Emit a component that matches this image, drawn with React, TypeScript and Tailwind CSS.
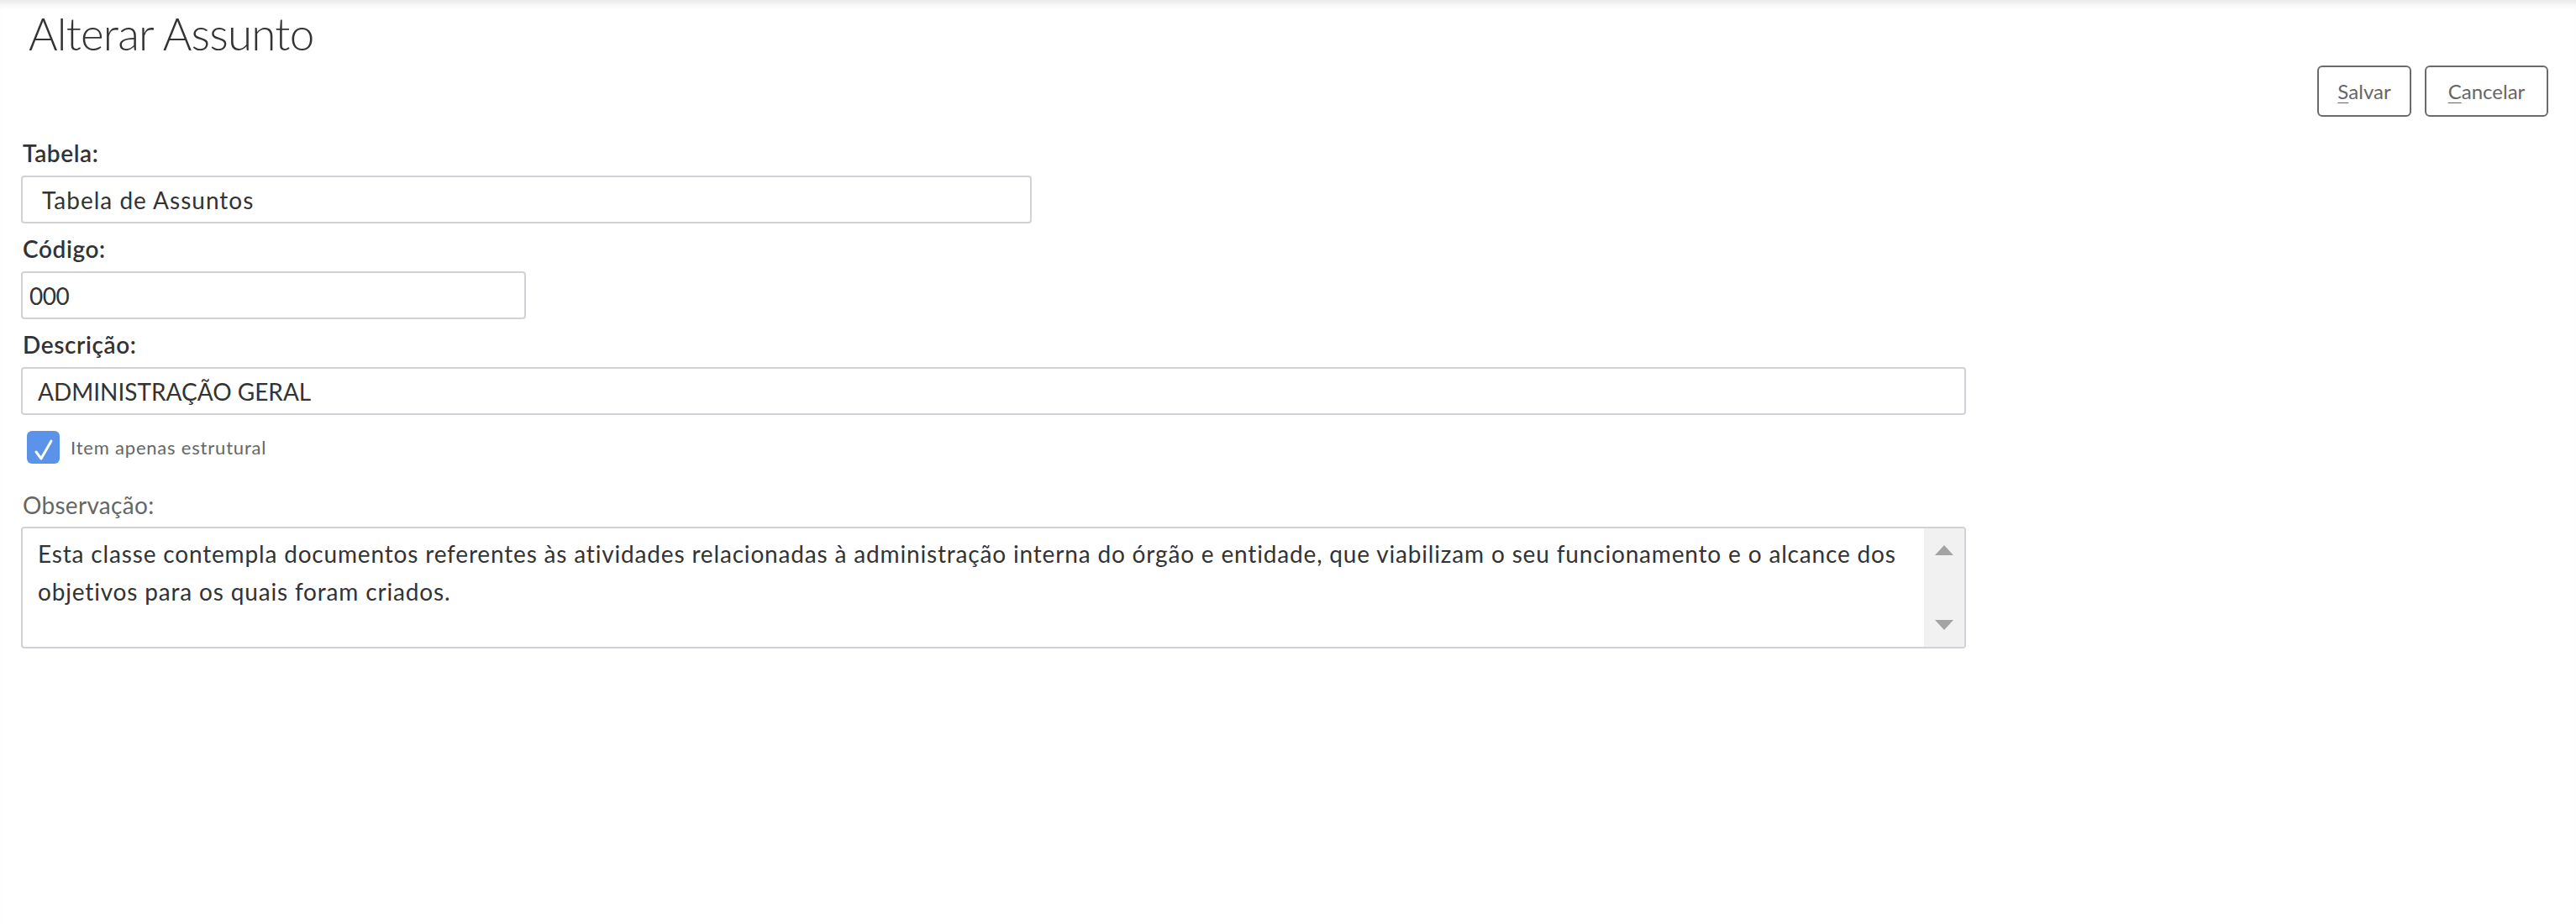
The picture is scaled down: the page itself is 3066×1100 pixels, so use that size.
import React from "react";

const font = { fontFamily: "Lato, 'Open Sans', sans-serif" };

export default function App() {
  return (
    <div
      className="min-h-[1100px] w-full bg-white text-[#333] shadow-[inset_0_10px_8px_-6px_rgba(0,0,0,0.10)]"
      style={font}
    >
      {/* Title */}
      <h1 className="pt-[10px] pl-[34px] text-[53px] leading-[60px] font-light tracking-[-0.8px] text-[#333]">
        Alterar Assunto
      </h1>

      {/* Actions */}
      <div className="mt-[8px] flex justify-end gap-[16px] pr-[33px]">
        <button className="flex h-[61px] w-[112px] items-center justify-center rounded-[6px] border-2 border-[#6b6b6b] text-[24px] text-[#666]">
          <span className="underline decoration-1 underline-offset-4">S</span>alvar
        </button>
        <button className="flex h-[61px] w-[147px] items-center justify-center rounded-[6px] border-2 border-[#6b6b6b] text-[24px] text-[#666]">
          <span className="underline decoration-1 underline-offset-4">C</span>ancelar
        </button>
      </div>

      {/* Form */}
      <div className="mt-[23px] pl-[25px]">
        <Field label="Tabela:" value="Tabela de Assuntos" width="w-[1203px]" pad="pl-[23px] tracking-[1px]" first />
        <Field label="Código:" value="000" width="w-[601px]" pad="pl-[8px] tracking-[-0.5px]" />
        <Field label="Descrição:" value="ADMINISTRAÇÃO GERAL" width="w-[2315px]" pad="pl-[18px]" />

        <div className="mt-[19px] ml-[7px] flex items-center gap-[13px]">
          <div className="flex h-[39px] w-[39px] items-center justify-center rounded-[6px] bg-[#5b93ea]">
            <svg width="39" height="39" viewBox="0 0 39 39" fill="none">
              <path d="M11 25 L17 33 L29 12" stroke="white" strokeWidth="3" strokeLinecap="round" strokeLinejoin="round" />
            </svg>
          </div>
          <span className="text-[22px] tracking-[0.8px] text-[#666]">Item apenas estrutural</span>
        </div>

        <label className="mt-[29px] block pl-[2px] text-[28px] leading-[40px] tracking-[0.3px] text-[#666]">Observação:</label>
        <div className="mt-[6px] flex h-[145px] w-[2315px] overflow-hidden rounded-[4px] border-2 border-[#cfd3d8]">
          <div className="flex-1 pt-[8px] pl-[18px] text-[28px] leading-[45px] tracking-[0.83px] text-[#333]">
            <div className="whitespace-nowrap">
              Esta classe contempla documentos referentes às atividades relacionadas à administração interna do órgão e entidade, que viabilizam o seu funcionamento e o alcance dos
            </div>
            <div className="whitespace-nowrap">objetivos para os quais foram criados.</div>
          </div>
          <div className="flex w-[48px] flex-col items-center justify-between bg-[#f1f1f1] py-[20px]">
            <svg width="22" height="12" viewBox="0 0 22 12">
              <path d="M11 0 L22 12 L0 12 Z" fill="#a3a3a3" />
            </svg>
            <svg width="22" height="12" viewBox="0 0 22 12">
              <path d="M0 0 L22 0 L11 12 Z" fill="#a3a3a3" />
            </svg>
          </div>
        </div>
      </div>
    </div>
  );
}

function Field({ label, value, width, pad, first }: { label: string; value: string; width: string; pad: string; first?: boolean }) {
  return (
    <div className={first ? "" : "mt-[10px]"}>
      <label className="block pl-[2px] text-[28px] leading-[40px] font-semibold tracking-[0.6px] text-[#333]">{label}</label>
      <div className={`mt-[7px] flex h-[57px] items-center rounded-[4px] border-2 border-[#cfd3d8] text-[28px] text-[#333] ${width} ${pad}`}>
        {value}
      </div>
    </div>
  );
}
